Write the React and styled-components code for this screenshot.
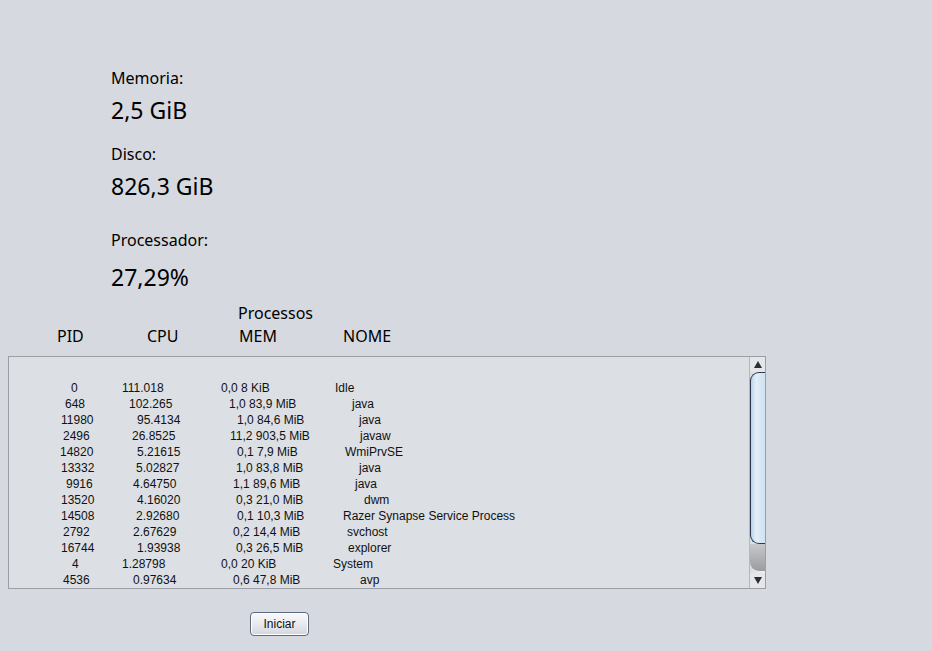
import React from "react";
import styled, { createGlobalStyle } from "styled-components";

const Global = createGlobalStyle`
  html, body {
    margin: 0;
    padding: 0;
    background: #d6d9df;
  }
  body {
    font-family: "Noto Sans", "DejaVu Sans", sans-serif;
    color: #000;
  }
`;

const Wrap = styled.div`
  width: 932px;
  height: 651px;
  background: #d6d9df;
  overflow: hidden;
  display: flex;
  flex-direction: column;
`;

const Stats = styled.div`
  padding-left: 111px;
  padding-top: 68px;
  display: flex;
  flex-direction: column;
`;

const Label = styled.div`
  font-size: 16px;
  line-height: 20px;
  margin-top: ${(p) => p.$mt || 0}px;
`;

const Value = styled.div`
  font-size: 23px;
  line-height: 30px;
  margin-top: ${(p) => p.$mt || 0}px;
`;

const Title = styled.div`
  font-size: 16px;
  line-height: 20px;
  margin-top: 11px;
  padding-left: 238px;
`;

const HeadRow = styled.div`
  display: flex;
  font-size: 16px;
  line-height: 20px;
  margin-top: 3px;
  padding-left: 57px;
`;

const HeadCell = styled.div`
  width: ${(p) => p.$w}px;
`;

const Box = styled.div`
  margin: 10px 0 0 8px;
  width: 758px;
  height: 233px;
  box-sizing: border-box;
  border: 1px solid #9b9ea4;
  background: #dcdfe4;
  display: flex;
`;

const Text = styled.div`
  flex: 1;
  padding-top: 23px;
  font-family: "Liberation Sans", Arial, sans-serif;
  font-size: 12px;
  color: #111;
  overflow: hidden;
`;

const Row = styled.div`
  display: flex;
  height: 16px;
  line-height: 16px;
  padding-left: ${(p) => p.$start}px;
  white-space: pre;
`;

const Cell = styled.span`
  flex: none;
  width: ${(p) => p.$w}px;
  padding-left: ${(p) => p.$pad}px;
  box-sizing: border-box;
`;

const ScrollBar = styled.div`
  width: 15px;
  display: flex;
  flex-direction: column;
  border-left: 1px solid #b5b8bd;
  background: #e4e6ea;
`;

const Arrow = styled.div`
  height: 15px;
  display: flex;
  align-items: center;
  justify-content: center;
  &::after {
    content: "";
    width: 0;
    height: 0;
    border-left: 4px solid transparent;
    border-right: 4px solid transparent;
    ${(p) =>
      p.$up
        ? "border-bottom: 7px solid #2a2d33;"
        : "border-top: 7px solid #2a2d33;"}
  }
`;

const Track = styled.div`
  flex: 1;
  display: flex;
  flex-direction: column;
  background: linear-gradient(90deg, #d8dbe0, #f0f1f3);
`;

const Thumb = styled.div`
  height: 172px;
  box-sizing: border-box;
  border: 1px solid #2b3a4e;
  border-right: none;
  border-radius: 9px 0 0 9px;
  background: linear-gradient(90deg, #b8d2ea 0%, #e3eef8 35%, #cfe1f2 100%);
`;

const Rest = styled.div`
  flex: 1;
  border-radius: 0 0 0 9px;
  background: linear-gradient(180deg, #c6c8cc 0%, #9a9ca0 100%);
  margin-bottom: 2px;
`;

const Button = styled.button`
  margin: 23px 0 0 250px;
  width: 59px;
  height: 24px;
  border: 1px solid #5b6b82;
  border-radius: 4px;
  background: linear-gradient(180deg, #fbfbfc 0%, #e8eaee 50%, #d3d7de 100%);
  box-shadow: inset 0 0 0 1px #ffffff;
  font-family: "Liberation Sans", Arial, sans-serif;
  font-size: 12px;
  color: #111;
  padding: 0;
`;

// column starts measured from the text area inner left (x = 9)
const cols = [
  { start: 40, w: 70 },
  { start: 110, w: 100 },
  { start: 210, w: 110 },
  { start: 320, w: 300 },
];

const rows = [
  [["0", 71], ["111.018", 122], ["0,0 8 KiB", 221], ["Idle", 335]],
  [["648", 65], ["102.265", 129], ["1,0 83,9 MiB", 229], ["java", 352]],
  [["11980", 61], ["95.4134", 137], ["1,0 84,6 MiB", 237], ["java", 359]],
  [["2496", 63], ["26.8525", 132], ["11,2 903,5 MiB", 230], ["javaw", 360]],
  [["14820", 60], ["5.21615", 137], ["0,1 7,9 MiB", 237], ["WmiPrvSE", 345]],
  [["13332", 61], ["5.02827", 136], ["1,0 83,8 MiB", 236], ["java", 359]],
  [["9916", 66], ["4.64750", 133], ["1,1 89,6 MiB", 233], ["java", 355]],
  [["13520", 61], ["4.16020", 137], ["0,3 21,0 MiB", 236], ["dwm", 364]],
  [["14508", 61], ["2.92680", 136], ["0,1 10,3 MiB", 237], ["Razer Synapse Service Process", 343]],
  [["2792", 63], ["2.67629", 133], ["0,2 14,4 MiB", 233], ["svchost", 347]],
  [["16744", 61], ["1.93938", 137], ["0,3 26,5 MiB", 236], ["explorer", 348]],
  [["4", 72], ["1.28798", 122], ["0,0 20 KiB", 221], ["System", 333]],
  [["4536", 63], ["0.97634", 133], ["0,6 47,8 MiB", 233], ["avp", 360]],
];

export default function App() {
  return (
    <Wrap>
      <Global />
      <Stats>
        <Label>Memoria:</Label>
        <Value $mt={7}>2,5 GiB</Value>
        <Label $mt={19}>Disco:</Label>
        <Value $mt={7}>826,3 GiB</Value>
        <Label $mt={29}>Processador:</Label>
        <Value $mt={12}>27,29%</Value>
      </Stats>
      <Title>Processos</Title>
      <HeadRow>
        <HeadCell $w={90}>PID</HeadCell>
        <HeadCell $w={92}>CPU</HeadCell>
        <HeadCell $w={104}>MEM</HeadCell>
        <HeadCell $w={100}>NOME</HeadCell>
      </HeadRow>
      <Box>
        <Text>
          {rows.map((r, i) => (
            <Row key={i} $start={cols[0].start}>
              {r.map(([t, x], j) => (
                <Cell key={j} $w={cols[j].w} $pad={x - 9 - cols[j].start}>
                  {t}
                </Cell>
              ))}
            </Row>
          ))}
        </Text>
        <ScrollBar>
          <Arrow $up />
          <Track>
            <Thumb />
            <Rest />
          </Track>
          <Arrow />
        </ScrollBar>
      </Box>
      <Button>Iniciar</Button>
    </Wrap>
  );
}
